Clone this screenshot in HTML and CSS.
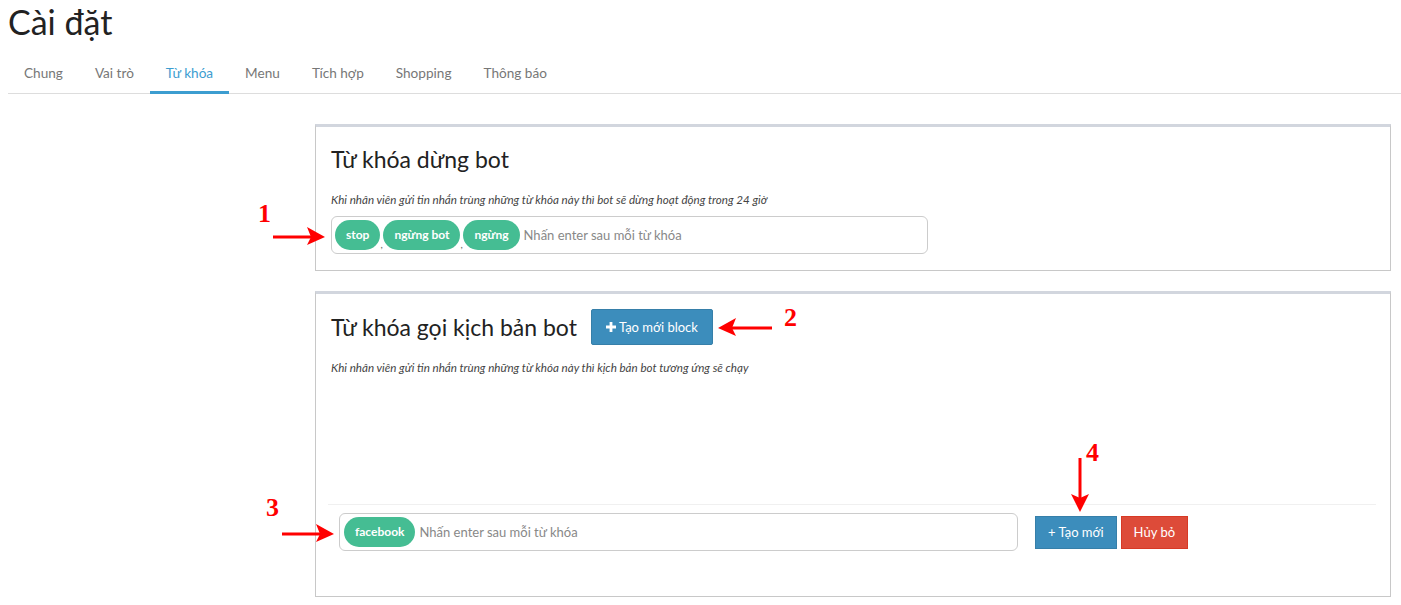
FILE: index.html
```html
<!DOCTYPE html>
<html lang="vi">
<head>
<meta charset="utf-8">
<title>Cài đặt</title>
<link rel="stylesheet" href="styles.css">
</head>
<body>
<div class="page">
  <h1 class="page-title">Cài đặt</h1>
  <ul class="tabs">
    <li class="tab">Chung</li>
    <li class="tab">Vai trò</li>
    <li class="tab active">Từ khóa</li>
    <li class="tab">Menu</li>
    <li class="tab">Tích hợp</li>
    <li class="tab">Shopping</li>
    <li class="tab">Thông báo</li>
  </ul>

  <div class="content">
    <section class="box box-stop">
      <h3 class="box-title">Từ khóa dừng bot</h3>
      <p class="hint">Khi nhân viên gửi tin nhắn trùng những từ khóa này thì bot sẽ dừng hoạt động trong 24 giờ</p>
      <div class="tag-input tag-input-stop">
        <span class="tag">stop</span><span class="sep">,</span><span class="tag">ngừng bot</span><span class="sep">,</span><span class="tag">ngừng</span><span class="placeholder">Nhấn enter sau mỗi từ khóa</span>
      </div>
    </section>

    <section class="box box-script">
      <div class="box-head">
        <h3 class="box-title">Từ khóa gọi kịch bản bot</h3>
        <button class="btn btn-primary btn-block-new"><svg class="plus" viewBox="0 0 10 10" width="10" height="10"><path d="M3.6 0h2.8v3.6H10v2.8H6.4V10H3.6V6.4H0V3.6h3.6z" fill="#fff"/></svg>Tạo mới block</button>
      </div>
      <p class="hint">Khi nhân viên gửi tin nhắn trùng những từ khóa này thì kịch bản bot tương ứng sẽ chạy</p>
      <div class="spacer"></div>
      <div class="form-row">
        <div class="tag-input tag-input-script">
          <span class="tag">facebook</span><span class="placeholder">Nhấn enter sau mỗi từ khóa</span>
        </div>
        <div class="actions">
          <button class="btn btn-primary btn-sm">+ Tạo mới</button>
          <button class="btn btn-danger btn-sm">Hủy bỏ</button>
        </div>
      </div>
    </section>
  </div>

  <div class="note note-1">
    <span class="num">1</span>
    <svg class="arrow" width="56" height="20" viewBox="0 0 56 20"><path d="M0 9.5h40v3H0z" fill="#f00"/><path d="M34 1 L52 11 L34 19 L38 11 Z" fill="#f00"/></svg>
  </div>
  <div class="note note-2">
    <svg class="arrow" width="56" height="20" viewBox="0 0 56 20"><path d="M14 9.5h42v3H14z" fill="#f00"/><path d="M20 1 L2 11 L20 19 L16 11 Z" fill="#f00"/></svg>
    <span class="num">2</span>
  </div>
  <div class="note note-3">
    <span class="num">3</span>
    <svg class="arrow" width="56" height="20" viewBox="0 0 56 20"><path d="M0 9.5h40v3H0z" fill="#f00"/><path d="M34 1 L52 11 L34 19 L38 11 Z" fill="#f00"/></svg>
  </div>
  <div class="note note-4">
    <svg class="arrow-v" width="20" height="56" viewBox="0 0 20 56"><path d="M8.5 0h3v42h-3z" fill="#f00"/><path d="M1 36 L10 54 L19 36 L10 40 Z" fill="#f00"/></svg>
    <span class="num">4</span>
  </div>
</div>
</body>
</html>
```

FILE: styles.css
```css
* { box-sizing: border-box; }
html, body { margin: 0; padding: 0; background: #fff; }
body {
  font-family: "Lato", "Liberation Sans", sans-serif;
  color: #333;
  width: 1401px;
  height: 605px;
  overflow: hidden;
}
.page {
  position: relative;
  padding-left: 8px;
}
.page-title {
  margin: 0;
  font-size: 34px;
  line-height: 44px;
  font-weight: 400;
  color: #222;
}
.tabs {
  list-style: none;
  margin: 8px 0 0;
  padding: 0;
  display: flex;
  border-bottom: 1px solid #ddd;
}
.tab {
  padding: 10px 16px 7px;
  font-size: 13.6px;
  line-height: 22px;
  color: #777;
  border-bottom: 3px solid transparent;
  margin-bottom: -1px;
}
.tab.active {
  color: #3c9dd0;
  border-bottom-color: #3c9dd0;
}
.content {
  margin: 30px 10px 0 307px;
}
.box {
  border: 1px solid #c8c8c8;
  border-top: 3px solid #d2d6de;
  background: #fff;
}
.box-stop {
  padding: 17px 15px 16px;
}
.box-script {
  margin-top: 20px;
  padding: 15px 0 45px;
}
.box-title {
  margin: 0;
  font-size: 23px;
  line-height: 30px;
  font-weight: 400;
  color: #222;
}
.box-stop .box-title { margin-bottom: 18px; }
.hint {
  margin: 0 0 8px;
  font-size: 11.6px;
  line-height: 16px;
  font-style: italic;
  color: #444;
}
.box-script .hint {
  margin: 15px 15px 0;
}
.box-head {
  display: flex;
  align-items: center;
  padding: 0 15px;
  height: 36px;
}
.box-head .box-title { margin-right: 14px; }
.btn {
  border: 1px solid transparent;
  border-radius: 2px;
  color: #fff;
  font-family: inherit;
  font-size: 13px;
  cursor: pointer;
  display: inline-flex;
  align-items: center;
  justify-content: center;
  white-space: nowrap;
}
.btn-primary { background: #3c8dbc; border-color: #367fa9; }
.btn-danger { background: #dd4b39; border-color: #d73925; }
.btn-block-new {
  height: 36px;
  padding: 0 14px;
}
.plus { margin-right: 3px; }
.btn-sm {
  height: 33px;
  padding: 0 12px;
  border-radius: 0;
}
.actions { display: flex; gap: 4px; margin-left: 17px; }
.spacer { height: 128px; }
.form-row {
  display: flex;
  align-items: center;
  margin: 0 14px 0 12px;
  padding: 8px 0 0 11px;
  border-top: 1px solid #f0f0f0;
}
.tag-input {
  display: flex;
  align-items: center;
  height: 38px;
  border: 1px solid #ccc;
  border-radius: 6px;
  padding: 0 3px;
}
.tag-input-stop { width: 597px; }
.tag-input-script { width: 679px; padding-left: 4px; }
.tag {
  display: inline-block;
  height: 30px;
  line-height: 30px;
  padding: 0 11px;
  border-radius: 15px;
  background: #45bd93;
  color: #fff;
  font-size: 12px;
  font-weight: 700;
  white-space: nowrap;
}
.sep {
  align-self: flex-end;
  font-size: 10px;
  line-height: 12px;
  color: #666;
  margin-bottom: 3px;
  width: 3px;
}
.placeholder {
  margin-left: 4px;
  font-size: 13px;
  color: #888;
  white-space: nowrap;
}
.note {
  position: absolute;
  display: flex;
  align-items: center;
}
.num {
  font-family: "Liberation Serif", serif;
  font-weight: 700;
  font-size: 26px;
  line-height: 26px;
  color: #f00;
}
.note-1 { left: 258px; top: 201px; }
.note-1 .num { position: absolute; left: 0; top: 0; }
.note-1 .arrow { position: absolute; left: 15px; top: 25px; }
.note-2 { left: 716px; top: 305px; }
.note-2 .arrow { position: absolute; left: 0; top: 12px; }
.note-2 .num { position: absolute; left: 68px; top: 0; }
.note-3 { left: 266px; top: 495px; }
.note-3 .num { position: absolute; left: 0; top: 0; }
.note-3 .arrow { position: absolute; left: 16px; top: 28px; }
.note-4 { left: 1070px; top: 440px; }
.note-4 .arrow-v { position: absolute; left: 0; top: 18px; }
.note-4 .num { position: absolute; left: 16px; top: 0; }
```
